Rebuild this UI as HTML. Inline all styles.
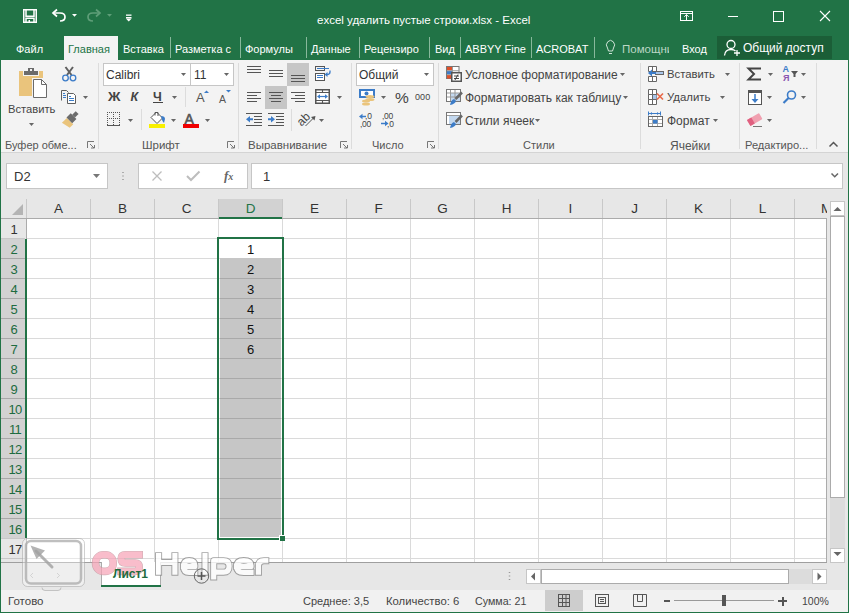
<!DOCTYPE html>
<html><head><meta charset="utf-8"><style>
*{margin:0;padding:0;box-sizing:border-box}
html,body{width:849px;height:613px;overflow:hidden;background:#e7e7e7;font-family:"Liberation Sans",sans-serif;font-size:12px;color:#444}
.a{position:absolute;white-space:nowrap}
.tab{color:#fff;font-size:11px;top:42px}
.tsep{top:37px;width:1px;height:21px;background:#88b89b}
.gsep{top:63px;width:1px;height:86px;background:#dcdcdc}
.glbl{top:138px;color:#555;font-size:11.5px}
.combo{background:#fff;border:1px solid #c6c6c6}
.ch{top:203px;font-size:13px;color:#333;text-align:center;width:63px}
.rh{left:1px;width:25px;font-size:13px;color:#333;text-align:center}
.num{font-size:13px;color:#111;text-align:center;width:63px;left:219px}
svg{position:absolute;overflow:visible}
</style></head><body>
<div class="a" style="left:0px;top:0px;width:849px;height:60px;background:#217346;"></div>
<div class="a" style="left:317px;top:14px;color:#fff;font-size:11.5px">excel удалить пустые строки.xlsx - Excel</div>
<div class="a" style="left:64px;top:36px;width:54px;height:24px;background:#f3f3f3;"></div>
<div class="a" style="left:16px;top:43px;color:#fff;font-size:11px">Файл</div>
<div class="a" style="left:68px;top:43px;color:#217346;font-size:11px">Главная</div>
<div class="a" style="left:123px;top:43px;color:#fff;font-size:11px">Вставка</div>
<div class="a" style="left:170px;top:37px;width:1px;height:21px;background:#88b89b;"></div>
<div class="a" style="left:175px;top:43px;color:#fff;font-size:11px">Разметка с</div>
<div class="a" style="left:240px;top:37px;width:1px;height:21px;background:#88b89b;"></div>
<div class="a" style="left:245px;top:43px;color:#fff;font-size:11px">Формулы</div>
<div class="a" style="left:306px;top:37px;width:1px;height:21px;background:#88b89b;"></div>
<div class="a" style="left:311px;top:43px;color:#fff;font-size:11px">Данные</div>
<div class="a" style="left:359px;top:37px;width:1px;height:21px;background:#88b89b;"></div>
<div class="a" style="left:364px;top:43px;color:#fff;font-size:11px">Рецензиро</div>
<div class="a" style="left:429px;top:37px;width:1px;height:21px;background:#88b89b;"></div>
<div class="a" style="left:435px;top:43px;color:#fff;font-size:11px">Вид</div>
<div class="a" style="left:460px;top:37px;width:1px;height:21px;background:#88b89b;"></div>
<div class="a" style="left:465px;top:43px;color:#fff;font-size:11px">ABBYY Fine</div>
<div class="a" style="left:531px;top:37px;width:1px;height:21px;background:#88b89b;"></div>
<div class="a" style="left:536px;top:43px;color:#fff;font-size:11px">ACROBAT</div>
<div class="a" style="left:594px;top:37px;width:1px;height:21px;background:#88b89b;"></div>
<div class="a" style="left:622px;top:43px;color:#bcd7c5;font-size:11.5px;width:47px;overflow:hidden">Помощник</div>
<div class="a" style="left:682px;top:43px;color:#fff;font-size:11px">Вход</div>
<div class="a" style="left:717px;top:36px;width:115px;height:23px;background:#1b5e37;"></div>
<div class="a" style="left:743px;top:41px;color:#fff;font-size:12px">Общий доступ</div>
<div class="a" style="left:1px;top:60px;width:847px;height:92px;background:#f3f3f3;"></div>
<div class="a" style="left:1px;top:152px;width:847px;height:1px;background:#d4d4d4;"></div>
<div class="a" style="left:98px;top:63px;width:1px;height:86px;background:#dcdcdc;"></div>
<div class="a" style="left:238px;top:63px;width:1px;height:86px;background:#dcdcdc;"></div>
<div class="a" style="left:351px;top:63px;width:1px;height:86px;background:#dcdcdc;"></div>
<div class="a" style="left:438px;top:63px;width:1px;height:86px;background:#dcdcdc;"></div>
<div class="a" style="left:640px;top:63px;width:1px;height:86px;background:#dcdcdc;"></div>
<div class="a" style="left:739px;top:63px;width:1px;height:86px;background:#dcdcdc;"></div>
<div class="a" style="left:816px;top:63px;width:1px;height:86px;background:#dcdcdc;"></div>
<div class="a" style="left:8px;top:103px;color:#444;font-size:11.2px">Вставить</div>
<div class="a" style="left:5px;top:138.5px;color:#555;font-size:11px">Буфер обме...</div>
<div class="a combo" style="left:103px;top:63px;width:88px;height:23px"></div>
<div class="a combo" style="left:190px;top:63px;width:44px;height:23px"></div>
<div class="a" style="left:106px;top:68px;color:#333;font-size:12px">Calibri</div>
<div class="a" style="left:194px;top:68px;color:#333;font-size:12px">11</div>
<div class="a" style="left:107.5px;top:89.5px;color:#444;font-size:12.5px;font-weight:bold;transform:scaleX(1.1);transform-origin:0 0">Ж</div>
<div class="a" style="left:130.5px;top:89.5px;color:#444;font-size:12.5px;font-weight:bold;font-style:italic">К</div>
<div class="a" style="left:153px;top:89.5px;color:#444;font-size:12.5px;font-weight:bold">Ч</div>
<div class="a" style="left:196px;top:90px;color:#555;font-size:13px">A</div>
<div class="a" style="left:219px;top:93px;color:#555;font-size:10.5px">A</div>
<div class="a" style="left:184.5px;top:110.5px;color:#555;font-size:14px;-webkit-text-stroke:0.6px #555">A</div>
<div class="a" style="left:142px;top:138.5px;color:#555;font-size:11.5px">Шрифт</div>
<div class="a" style="left:297px;top:111px;font-size:12px;color:#444;transform:rotate(-45deg);transform-origin:8px 8px;-webkit-font-smoothing:grayscale">ab</div>
<div class="a" style="left:248px;top:138.5px;color:#555;font-size:11.5px">Выравнивание</div>
<div class="a combo" style="left:356px;top:63px;width:78px;height:23px"></div>
<div class="a" style="left:359px;top:68px;color:#333;font-size:12px">Общий</div>
<div class="a" style="left:395px;top:88.5px;color:#444;font-size:15.5px">%</div>
<div class="a" style="left:415px;top:92px;color:#444;font-size:9px;letter-spacing:0.1px">000</div>
<div class="a" style="left:372px;top:138.5px;color:#555;font-size:11px">Число</div>
<div class="a" style="left:465px;top:68px;color:#444;font-size:12px">Условное форматирование</div>
<div class="a" style="left:465px;top:91px;color:#444;font-size:12px">Форматировать как таблицу</div>
<div class="a" style="left:465px;top:114px;color:#444;font-size:12px">Стили ячеек</div>
<div class="a" style="left:523px;top:138.5px;color:#555;font-size:11px">Стили</div>
<div class="a" style="left:667px;top:68px;color:#444;font-size:11.3px">Вставить</div>
<div class="a" style="left:667px;top:91px;color:#444;font-size:11.4px">Удалить</div>
<div class="a" style="left:667px;top:114px;color:#444;font-size:12px">Формат</div>
<div class="a" style="left:670px;top:138.5px;color:#555;font-size:12px">Ячейки</div>
<div class="a" style="left:782.5px;top:64px;color:#3c7cc8;font-size:9px;font-weight:bold">A</div>
<div class="a" style="left:783px;top:72.5px;color:#8a55b0;font-size:9px;font-weight:bold">Я</div>
<div class="a" style="left:745px;top:138.5px;color:#555;font-size:11.1px">Редактиро...</div>
<div class="a combo" style="left:6px;top:163px;width:102px;height:26px"></div>
<div class="a" style="left:14px;top:169px;font-size:13px;color:#333">D2</div>
<div class="a combo" style="left:138px;top:163px;width:110px;height:26px"></div>
<div class="a combo" style="left:251px;top:163px;width:592px;height:26px"></div>
<div class="a" style="left:263px;top:169px;font-size:13px;color:#333">1</div>
<svg style="left:0;top:0" width="849" height="613"><polygon points="23,204 23,215 12,215" fill="#b4b4b4"/></svg>
<div class="a" style="left:219px;top:199px;width:63px;height:18px;background:#d2d2d2;"></div>
<div class="a" style="left:1px;top:218px;width:826px;height:1px;background:#ababab;"></div>
<div class="a" style="left:219px;top:217px;width:63px;height:2px;background:#217346;"></div>
<div class="a" style="left:26px;top:199px;width:1px;height:19px;background:#c8c8c8;"></div>
<div class="a" style="left:90px;top:199px;width:1px;height:19px;background:#c8c8c8;"></div>
<div class="a" style="left:154px;top:199px;width:1px;height:19px;background:#c8c8c8;"></div>
<div class="a" style="left:218px;top:199px;width:1px;height:19px;background:#c8c8c8;"></div>
<div class="a" style="left:282px;top:199px;width:1px;height:19px;background:#c8c8c8;"></div>
<div class="a" style="left:346px;top:199px;width:1px;height:19px;background:#c8c8c8;"></div>
<div class="a" style="left:410px;top:199px;width:1px;height:19px;background:#c8c8c8;"></div>
<div class="a" style="left:474px;top:199px;width:1px;height:19px;background:#c8c8c8;"></div>
<div class="a" style="left:538px;top:199px;width:1px;height:19px;background:#c8c8c8;"></div>
<div class="a" style="left:602px;top:199px;width:1px;height:19px;background:#c8c8c8;"></div>
<div class="a" style="left:666px;top:199px;width:1px;height:19px;background:#c8c8c8;"></div>
<div class="a" style="left:730px;top:199px;width:1px;height:19px;background:#c8c8c8;"></div>
<div class="a" style="left:794px;top:199px;width:1px;height:19px;background:#c8c8c8;"></div>
<div class="a" style="left:27px;top:200.5px;font-size:13.5px;color:#333;width:63px;text-align:center">A</div>
<div class="a" style="left:91px;top:200.5px;font-size:13.5px;color:#333;width:63px;text-align:center">B</div>
<div class="a" style="left:155px;top:200.5px;font-size:13.5px;color:#333;width:63px;text-align:center">C</div>
<div class="a" style="left:219px;top:200.5px;font-size:13.5px;color:#217346;width:63px;text-align:center">D</div>
<div class="a" style="left:283px;top:200.5px;font-size:13.5px;color:#333;width:63px;text-align:center">E</div>
<div class="a" style="left:347px;top:200.5px;font-size:13.5px;color:#333;width:63px;text-align:center">F</div>
<div class="a" style="left:411px;top:200.5px;font-size:13.5px;color:#333;width:63px;text-align:center">G</div>
<div class="a" style="left:475px;top:200.5px;font-size:13.5px;color:#333;width:63px;text-align:center">H</div>
<div class="a" style="left:539px;top:200.5px;font-size:13.5px;color:#333;width:63px;text-align:center">I</div>
<div class="a" style="left:603px;top:200.5px;font-size:13.5px;color:#333;width:63px;text-align:center">J</div>
<div class="a" style="left:667px;top:200.5px;font-size:13.5px;color:#333;width:63px;text-align:center">K</div>
<div class="a" style="left:731px;top:200.5px;font-size:13.5px;color:#333;width:63px;text-align:center">L</div>
<div class="a" style="left:795px;top:200.5px;font-size:13.5px;color:#333;width:63px;text-align:center">M</div>
<div class="a" style="left:827px;top:199px;width:3px;height:20px;background:#e7e7e7;"></div>
<div class="a" style="left:27px;top:219px;width:799px;height:343px;background:#fff;"></div>
<div class="a" style="left:1px;top:219px;width:25px;height:343px;background:#e7e7e7;"></div>
<div class="a" style="left:1px;top:239px;width:24px;height:299px;background:#d2d2d2;"></div>
<div class="a" style="left:25px;top:239px;width:2px;height:299px;background:#217346;"></div>
<div class="a" style="left:26px;top:219px;width:1px;height:20px;background:#ababab;"></div>
<div class="a" style="left:26px;top:538px;width:1px;height:24px;background:#ababab;"></div>
<div class="a" style="left:27px;top:238px;width:799px;height:1px;background:#dadada;"></div>
<div class="a" style="left:1px;top:238px;width:24px;height:1px;background:#c8c8c8;"></div>
<div class="a" style="left:27px;top:258px;width:799px;height:1px;background:#dadada;"></div>
<div class="a" style="left:1px;top:258px;width:24px;height:1px;background:#a8a8a8;"></div>
<div class="a" style="left:27px;top:278px;width:799px;height:1px;background:#dadada;"></div>
<div class="a" style="left:1px;top:278px;width:24px;height:1px;background:#a8a8a8;"></div>
<div class="a" style="left:27px;top:298px;width:799px;height:1px;background:#dadada;"></div>
<div class="a" style="left:1px;top:298px;width:24px;height:1px;background:#a8a8a8;"></div>
<div class="a" style="left:27px;top:318px;width:799px;height:1px;background:#dadada;"></div>
<div class="a" style="left:1px;top:318px;width:24px;height:1px;background:#a8a8a8;"></div>
<div class="a" style="left:27px;top:338px;width:799px;height:1px;background:#dadada;"></div>
<div class="a" style="left:1px;top:338px;width:24px;height:1px;background:#a8a8a8;"></div>
<div class="a" style="left:27px;top:358px;width:799px;height:1px;background:#dadada;"></div>
<div class="a" style="left:1px;top:358px;width:24px;height:1px;background:#a8a8a8;"></div>
<div class="a" style="left:27px;top:378px;width:799px;height:1px;background:#dadada;"></div>
<div class="a" style="left:1px;top:378px;width:24px;height:1px;background:#a8a8a8;"></div>
<div class="a" style="left:27px;top:398px;width:799px;height:1px;background:#dadada;"></div>
<div class="a" style="left:1px;top:398px;width:24px;height:1px;background:#a8a8a8;"></div>
<div class="a" style="left:27px;top:418px;width:799px;height:1px;background:#dadada;"></div>
<div class="a" style="left:1px;top:418px;width:24px;height:1px;background:#a8a8a8;"></div>
<div class="a" style="left:27px;top:438px;width:799px;height:1px;background:#dadada;"></div>
<div class="a" style="left:1px;top:438px;width:24px;height:1px;background:#a8a8a8;"></div>
<div class="a" style="left:27px;top:458px;width:799px;height:1px;background:#dadada;"></div>
<div class="a" style="left:1px;top:458px;width:24px;height:1px;background:#a8a8a8;"></div>
<div class="a" style="left:27px;top:478px;width:799px;height:1px;background:#dadada;"></div>
<div class="a" style="left:1px;top:478px;width:24px;height:1px;background:#a8a8a8;"></div>
<div class="a" style="left:27px;top:498px;width:799px;height:1px;background:#dadada;"></div>
<div class="a" style="left:1px;top:498px;width:24px;height:1px;background:#a8a8a8;"></div>
<div class="a" style="left:27px;top:518px;width:799px;height:1px;background:#dadada;"></div>
<div class="a" style="left:1px;top:518px;width:24px;height:1px;background:#a8a8a8;"></div>
<div class="a" style="left:27px;top:538px;width:799px;height:1px;background:#dadada;"></div>
<div class="a" style="left:1px;top:538px;width:24px;height:1px;background:#c8c8c8;"></div>
<div class="a" style="left:27px;top:558px;width:799px;height:1px;background:#dadada;"></div>
<div class="a" style="left:1px;top:558px;width:24px;height:1px;background:#c8c8c8;"></div>
<div class="a" style="left:90px;top:219px;width:1px;height:343px;background:#dadada;"></div>
<div class="a" style="left:154px;top:219px;width:1px;height:343px;background:#dadada;"></div>
<div class="a" style="left:218px;top:219px;width:1px;height:343px;background:#dadada;"></div>
<div class="a" style="left:282px;top:219px;width:1px;height:343px;background:#dadada;"></div>
<div class="a" style="left:346px;top:219px;width:1px;height:343px;background:#dadada;"></div>
<div class="a" style="left:410px;top:219px;width:1px;height:343px;background:#dadada;"></div>
<div class="a" style="left:474px;top:219px;width:1px;height:343px;background:#dadada;"></div>
<div class="a" style="left:538px;top:219px;width:1px;height:343px;background:#dadada;"></div>
<div class="a" style="left:602px;top:219px;width:1px;height:343px;background:#dadada;"></div>
<div class="a" style="left:666px;top:219px;width:1px;height:343px;background:#dadada;"></div>
<div class="a" style="left:730px;top:219px;width:1px;height:343px;background:#dadada;"></div>
<div class="a" style="left:794px;top:219px;width:1px;height:343px;background:#dadada;"></div>
<div class="a" style="left:220px;top:258px;width:61px;height:279px;background:#c6c6c6;"></div>
<div class="a" style="left:220px;top:278px;width:61px;height:1px;background:#a9a9a9;"></div>
<div class="a" style="left:220px;top:298px;width:61px;height:1px;background:#a9a9a9;"></div>
<div class="a" style="left:220px;top:318px;width:61px;height:1px;background:#a9a9a9;"></div>
<div class="a" style="left:220px;top:338px;width:61px;height:1px;background:#a9a9a9;"></div>
<div class="a" style="left:220px;top:358px;width:61px;height:1px;background:#a9a9a9;"></div>
<div class="a" style="left:220px;top:378px;width:61px;height:1px;background:#a9a9a9;"></div>
<div class="a" style="left:220px;top:398px;width:61px;height:1px;background:#a9a9a9;"></div>
<div class="a" style="left:220px;top:418px;width:61px;height:1px;background:#a9a9a9;"></div>
<div class="a" style="left:220px;top:438px;width:61px;height:1px;background:#a9a9a9;"></div>
<div class="a" style="left:220px;top:458px;width:61px;height:1px;background:#a9a9a9;"></div>
<div class="a" style="left:220px;top:478px;width:61px;height:1px;background:#a9a9a9;"></div>
<div class="a" style="left:220px;top:498px;width:61px;height:1px;background:#a9a9a9;"></div>
<div class="a" style="left:220px;top:518px;width:61px;height:1px;background:#a9a9a9;"></div>
<div class="a" style="left:217px;top:237px;width:67px;height:2px;background:#217346;"></div>
<div class="a" style="left:217px;top:237px;width:2px;height:303px;background:#217346;"></div>
<div class="a" style="left:282px;top:237px;width:2px;height:298px;background:#217346;"></div>
<div class="a" style="left:217px;top:538px;width:62px;height:2px;background:#217346;"></div>
<div class="a" style="left:279px;top:535px;width:6px;height:6px;background:#fff;"></div>
<div class="a" style="left:280px;top:536px;width:5px;height:5px;background:#217346;"></div>
<div class="a" style="left:1.5px;top:222px;font-size:13px;color:#333;width:25px;text-align:center;">1</div>
<div class="a" style="left:1.5px;top:242px;font-size:13px;color:#1d6b40;width:25px;text-align:center;">2</div>
<div class="a" style="left:1.5px;top:262px;font-size:13px;color:#1d6b40;width:25px;text-align:center;">3</div>
<div class="a" style="left:1.5px;top:282px;font-size:13px;color:#1d6b40;width:25px;text-align:center;">4</div>
<div class="a" style="left:1.5px;top:302px;font-size:13px;color:#1d6b40;width:25px;text-align:center;">5</div>
<div class="a" style="left:1.5px;top:322px;font-size:13px;color:#1d6b40;width:25px;text-align:center;">6</div>
<div class="a" style="left:1.5px;top:342px;font-size:13px;color:#1d6b40;width:25px;text-align:center;">7</div>
<div class="a" style="left:1.5px;top:362px;font-size:13px;color:#1d6b40;width:25px;text-align:center;">8</div>
<div class="a" style="left:1.5px;top:382px;font-size:13px;color:#1d6b40;width:25px;text-align:center;">9</div>
<div class="a" style="left:2.5px;top:402px;font-size:13px;color:#1d6b40;width:25px;text-align:center;letter-spacing:-0.8px;">10</div>
<div class="a" style="left:2.5px;top:422px;font-size:13px;color:#1d6b40;width:25px;text-align:center;letter-spacing:-0.8px;">11</div>
<div class="a" style="left:2.5px;top:442px;font-size:13px;color:#1d6b40;width:25px;text-align:center;letter-spacing:-0.8px;">12</div>
<div class="a" style="left:2.5px;top:462px;font-size:13px;color:#1d6b40;width:25px;text-align:center;letter-spacing:-0.8px;">13</div>
<div class="a" style="left:2.5px;top:482px;font-size:13px;color:#1d6b40;width:25px;text-align:center;letter-spacing:-0.8px;">14</div>
<div class="a" style="left:2.5px;top:502px;font-size:13px;color:#1d6b40;width:25px;text-align:center;letter-spacing:-0.8px;">15</div>
<div class="a" style="left:2.5px;top:522px;font-size:13px;color:#1d6b40;width:25px;text-align:center;letter-spacing:-0.8px;">16</div>
<div class="a" style="left:2.5px;top:542px;font-size:13px;color:#333;width:25px;text-align:center;letter-spacing:-0.8px;">17</div>
<div class="a" style="left:219px;top:242px;font-size:13px;color:#111;width:63px;text-align:center">1</div>
<div class="a" style="left:219px;top:262px;font-size:13px;color:#111;width:63px;text-align:center">2</div>
<div class="a" style="left:219px;top:282px;font-size:13px;color:#111;width:63px;text-align:center">3</div>
<div class="a" style="left:219px;top:302px;font-size:13px;color:#111;width:63px;text-align:center">4</div>
<div class="a" style="left:219px;top:322px;font-size:13px;color:#111;width:63px;text-align:center">5</div>
<div class="a" style="left:219px;top:342px;font-size:13px;color:#111;width:63px;text-align:center">6</div>
<div class="a" style="left:826px;top:219px;width:1px;height:344px;background:#ababab;"></div>
<div class="a" style="left:224px;top:168px;color:#666;font-size:13px;font-family:'Liberation Serif',serif;font-weight:bold"><i>f</i><span style="font-size:10px;font-style:italic">x</span></div>
<div class="a" style="left:830px;top:216px;width:15px;height:332px;background:#dcdcdc;"></div>
<div class="a" style="left:830px;top:201px;width:15px;height:15px;background:#fff;border:1px solid #c6c6c6"></div>
<div class="a" style="left:830px;top:216px;width:15px;height:282px;background:#fff;border:1px solid #ababab"></div>
<div class="a" style="left:830px;top:548px;width:15px;height:15px;background:#fff;border:1px solid #c6c6c6"></div>
<div class="a" style="left:1px;top:562px;width:826px;height:1px;background:#9f9f9f;"></div>
<div class="a" style="left:101px;top:562px;width:60px;height:25px;background:#fff;border-left:1px solid #ababab;border-right:1px solid #ababab"></div>
<div class="a" style="left:101px;top:585px;width:60px;height:2px;background:#217346;"></div>
<div class="a" style="left:541px;top:569px;width:271px;height:15px;background:#dcdcdc;"></div>
<div class="a" style="left:526px;top:569px;width:15px;height:15px;background:#fff;border:1px solid #c6c6c6"></div>
<div class="a" style="left:541px;top:569px;width:248px;height:15px;background:#fff;border:1px solid #ababab"></div>
<div class="a" style="left:812px;top:569px;width:15px;height:15px;background:#fff;border:1px solid #c6c6c6"></div>
<div class="a" style="left:1px;top:590px;width:847px;height:22px;background:#f1f1f1;"></div>
<div class="a" style="left:8px;top:595px;color:#444;font-size:11.5px">Готово</div>
<div class="a" style="left:303px;top:595px;color:#444;font-size:11px">Среднее: 3,5</div>
<div class="a" style="left:386px;top:595px;color:#444;font-size:11.3px">Количество: 6</div>
<div class="a" style="left:475px;top:595px;color:#444;font-size:10.7px">Сумма: 21</div>
<div class="a" style="left:545px;top:590px;width:38px;height:21px;background:#cdcdcd;"></div>
<div class="a" style="left:664px;top:600px;width:6px;height:2px;background:#555;"></div>
<div class="a" style="left:674px;top:600px;width:100px;height:1px;background:#999;"></div>
<div class="a" style="left:722px;top:595px;width:4px;height:11px;background:#555;"></div>
<div class="a" style="left:778px;top:600px;width:9px;height:2px;background:#555;"></div>
<div class="a" style="left:781.5px;top:596.5px;width:2px;height:9px;background:#555;"></div>
<div class="a" style="left:802px;top:595px;color:#444;font-size:10.5px">100%</div>
<svg style="left:0;top:0" width="849" height="613" shape-rendering="geometricPrecision"><rect x="23.75" y="9.75" width="12.5" height="12.5" fill="none" stroke="#fff" stroke-width="1.5"/><path d="M26,10 V16.25 H34 V10" fill="none" stroke="#fff" stroke-width="1.5"/><path d="M26,22 V18.25 H34 V22" fill="none" stroke="#fff" stroke-width="1.5"/><rect x="28.5" y="20" width="1.5" height="2" fill="#fff"/><path d="M53.5,13 H60 Q65,13 65,17 Q65,21 60,21" fill="none" stroke="#fff" stroke-width="1.7"/><path d="M57,9.5 L53,13 L57,16.5" fill="none" stroke="#fff" stroke-width="1.7"/><polygon points="72,14 77,14 74.5,16.8" fill="#fff"/><path d="M99.5,13 H93 Q88,13 88,17 Q88,21 93,21" fill="none" stroke="#5e9e78" stroke-width="1.7"/><path d="M96,9.5 L100,13 L96,16.5" fill="none" stroke="#5e9e78" stroke-width="1.7"/><polygon points="107,14 112,14 109.5,16.8" fill="#5e9e78"/><rect x="126" y="14.5" width="5.5" height="1.3" fill="#fff"/><rect x="126" y="17" width="5.5" height="1.3" fill="#fff"/><polygon points="125.8,18.5 131.7,18.5 128.75,21.5" fill="#fff"/><rect x="680.5" y="11.5" width="12" height="9" fill="none" stroke="#fff"/><path d="M681,13.5 H692 M686.5,14.5 V21 M684.3,16.8 L686.5,14.6 L688.7,16.8" fill="none" stroke="#fff"/><rect x="728" y="16" width="10" height="1" fill="#fff"/><rect x="773.5" y="11.5" width="10" height="10" fill="none" stroke="#fff"/><path d="M820,11 L830,21 M830,11 L820,21" fill="none" stroke="#fff" stroke-width="1.1"/><path d="M607.5,48 A4,4.5 0 1 1 613.5,48 L612.5,51 H608.5 Z" fill="none" stroke="#d0e4d8"/><path d="M609,53.5 H612" stroke="#d0e4d8"/><circle cx="731" cy="44.5" r="4" fill="none" stroke="#fff" stroke-width="1.3"/><path d="M724.5,55.5 Q725,49.5 731,49.5 Q734,49.5 735.5,51" fill="none" stroke="#fff" stroke-width="1.3"/><path d="M734,53 H740 M737,50 V56" fill="none" stroke="#fff" stroke-width="1.3"/><rect x="19" y="71" width="24" height="25" fill="#eac47c"/><rect x="23" y="70" width="16" height="6" fill="#f3f3f3"/><rect x="24" y="71" width="14" height="4" fill="#6b6b6b"/><rect x="28" y="68" width="6" height="4" fill="#6b6b6b"/><rect x="30" y="69" width="2" height="2" fill="#f3f3f3"/><rect x="32" y="78" width="16" height="21" fill="#f3f3f3"/><path d="M33.5,79.5 H41.5 L46.5,84.5 V97.5 H33.5 Z" fill="#fff" stroke="#6b6b6b"/><path d="M41.5,79.5 V84.5 H46.5" fill="none" stroke="#6b6b6b"/><polygon points="29,123 34,123 31.5,126" fill="#666"/><path d="M65.5,67 L71.5,75 M73,67 L67,75" stroke="#5f5f5f" stroke-width="2" fill="none"/><circle cx="65.5" cy="78" r="2.8" stroke="#3c7cc8" stroke-width="1.3" fill="none"/><circle cx="73" cy="78" r="2.8" stroke="#3c7cc8" stroke-width="1.3" fill="none"/><path d="M61.5,100.5 V90.5 H66.5 L68.5,92.5" fill="none" stroke="#5f5f5f"/><path d="M67.5,93.5 H73.5 L75.5,95.5 V103.5 H67.5 Z" fill="#fff" stroke="#5f5f5f"/><path d="M63,93.5 H65 M63,95.5 H66 M63,97.5 H66 M69,96.5 H71 M69,98.5 H74 M69,100.5 H74" stroke="#3c7cc8" fill="none"/><polygon points="83,96 88,96 85.5,99" fill="#666"/><g transform="rotate(-45 69 120)"><polygon points="62,117 69,117 69,126 64,126" fill="#eac47c"/><rect x="69" y="116.5" width="6" height="8" fill="#6b6b6b"/><rect x="75" y="118.5" width="5" height="4" fill="#6b6b6b"/></g><path d="M87.5,148 V141.5 H94" stroke="#777" fill="none"/><path d="M90,144 L94,148 M91,148 H94.5 V145" stroke="#777" fill="none"/><polygon points="181,73 186,73 183.5,76" fill="#666"/><polygon points="224,73 229,73 226.5,76" fill="#666"/><rect x="153" y="102" width="10" height="1" fill="#444"/><polygon points="172,96 177,96 174.5,99" fill="#666"/><rect x="185" y="87" width="1" height="20" fill="#dcdcdc"/><polygon points="204,93 209,93 206.5,90.5" fill="#3c7cc8"/><polygon points="226,90 231,90 228.5,92.5" fill="#3c7cc8"/><rect x="107" y="112" width="1" height="1" fill="#555"/><rect x="107" y="118" width="1" height="1" fill="#555"/><rect x="107" y="112" width="1" height="1" fill="#555"/><rect x="113" y="112" width="1" height="1" fill="#555"/><rect x="119" y="112" width="1" height="1" fill="#555"/><rect x="109" y="112" width="1" height="1" fill="#555"/><rect x="109" y="118" width="1" height="1" fill="#555"/><rect x="107" y="114" width="1" height="1" fill="#555"/><rect x="113" y="114" width="1" height="1" fill="#555"/><rect x="119" y="114" width="1" height="1" fill="#555"/><rect x="111" y="112" width="1" height="1" fill="#555"/><rect x="111" y="118" width="1" height="1" fill="#555"/><rect x="107" y="116" width="1" height="1" fill="#555"/><rect x="113" y="116" width="1" height="1" fill="#555"/><rect x="119" y="116" width="1" height="1" fill="#555"/><rect x="113" y="112" width="1" height="1" fill="#555"/><rect x="113" y="118" width="1" height="1" fill="#555"/><rect x="107" y="118" width="1" height="1" fill="#555"/><rect x="113" y="118" width="1" height="1" fill="#555"/><rect x="119" y="118" width="1" height="1" fill="#555"/><rect x="115" y="112" width="1" height="1" fill="#555"/><rect x="115" y="118" width="1" height="1" fill="#555"/><rect x="107" y="120" width="1" height="1" fill="#555"/><rect x="113" y="120" width="1" height="1" fill="#555"/><rect x="119" y="120" width="1" height="1" fill="#555"/><rect x="117" y="112" width="1" height="1" fill="#555"/><rect x="117" y="118" width="1" height="1" fill="#555"/><rect x="107" y="122" width="1" height="1" fill="#555"/><rect x="113" y="122" width="1" height="1" fill="#555"/><rect x="119" y="122" width="1" height="1" fill="#555"/><rect x="119" y="112" width="1" height="1" fill="#555"/><rect x="119" y="118" width="1" height="1" fill="#555"/><rect x="107" y="124" width="1" height="1" fill="#555"/><rect x="113" y="124" width="1" height="1" fill="#555"/><rect x="119" y="124" width="1" height="1" fill="#555"/><rect x="107" y="125" width="13" height="1" fill="#555"/><polygon points="128,119 133,119 130.5,122" fill="#666"/><rect x="141" y="109" width="1" height="21" fill="#dcdcdc"/><path d="M151,117.5 L156.5,112 L162.5,118 L157,123.5 Z" fill="#fff" stroke="#555"/><path d="M155,115.5 V112.5 H158 V116" fill="none" stroke="#555"/><path d="M161,116 Q165,116 165,119 L164,123 Q162,121 161.5,118 Z" fill="#3c7cc8"/><rect x="149" y="124" width="16" height="4" fill="#f8f000"/><polygon points="171,119 176,119 173.5,122" fill="#666"/><rect x="183" y="124" width="16" height="4" fill="#f00000"/><polygon points="205,119 210,119 207.5,122" fill="#666"/><path d="M227.5,148 V141.5 H234" stroke="#777" fill="none"/><path d="M230,144 L234,148 M231,148 H234.5 V145" stroke="#777" fill="none"/><rect x="287" y="63" width="22" height="23" fill="#c6c6c6"/><rect x="265" y="86" width="22" height="23" fill="#c6c6c6"/><rect x="247" y="66" width="14" height="1" fill="#555"/><rect x="247" y="69" width="14" height="1" fill="#555"/><rect x="247" y="72" width="14" height="1" fill="#555"/><rect x="269" y="70" width="14" height="1" fill="#555"/><rect x="269" y="73" width="14" height="1" fill="#555"/><rect x="269" y="76" width="14" height="1" fill="#555"/><rect x="291" y="75" width="14" height="1" fill="#555"/><rect x="291" y="78" width="14" height="1" fill="#555"/><rect x="291" y="81" width="14" height="1" fill="#555"/><rect x="247" y="92" width="14" height="1" fill="#555"/><rect x="247" y="95" width="10" height="1" fill="#555"/><rect x="247" y="98" width="14" height="1" fill="#555"/><rect x="247" y="101" width="10" height="1" fill="#555"/><rect x="269" y="92" width="14" height="1" fill="#555"/><rect x="271" y="95" width="10" height="1" fill="#555"/><rect x="269" y="98" width="14" height="1" fill="#555"/><rect x="271" y="101" width="10" height="1" fill="#555"/><rect x="291" y="92" width="14" height="1" fill="#555"/><rect x="295" y="95" width="10" height="1" fill="#555"/><rect x="291" y="98" width="14" height="1" fill="#555"/><rect x="295" y="101" width="10" height="1" fill="#555"/><rect x="315.5" y="66.5" width="9" height="4" fill="none" stroke="#555"/><rect x="315.5" y="73.5" width="9" height="7" fill="#fff" stroke="#555"/><path d="M317,68.5 H329 M317,75.5 H323 M317,77.5 H323" stroke="#3c7cc8" fill="none"/><path d="M330,70.5 V72 Q330,74.5 327,74.5 H326" stroke="#3c7cc8" stroke-width="1.3" fill="none"/><polygon points="324.5,74.5 327.5,72 327.5,77" fill="#3c7cc8"/><rect x="315.75" y="89.75" width="13.5" height="13.5" fill="#fff" stroke="#555" stroke-width="1.5"/><path d="M316,92.5 H329 M316,100.5 H329 M322.5,90 V92 M322.5,101 V103" stroke="#555" stroke-width="1.1" fill="none"/><path d="M319,96.5 H326" stroke="#3c7cc8" stroke-width="1.2" fill="none"/><polygon points="317,96.5 320,94.3 320,98.7" fill="#3c7cc8"/><polygon points="328,96.5 325,94.3 325,98.7" fill="#3c7cc8"/><polygon points="337,96 342,96 339.5,99" fill="#666"/><rect x="246" y="113" width="16" height="1" fill="#555"/><rect x="246" y="125" width="16" height="1" fill="#555"/><rect x="254" y="116" width="8" height="1" fill="#555"/><rect x="254" y="119" width="8" height="1" fill="#555"/><rect x="254" y="122" width="8" height="1" fill="#555"/><rect x="268" y="113" width="16" height="1" fill="#555"/><rect x="268" y="125" width="16" height="1" fill="#555"/><rect x="276" y="116" width="8" height="1" fill="#555"/><rect x="276" y="119" width="8" height="1" fill="#555"/><rect x="276" y="122" width="8" height="1" fill="#555"/><path d="M249,119.25 H253" stroke="#3c7cc8" stroke-width="2"/><polygon points="246,119.25 250,116 250,122.5" fill="#3c7cc8"/><path d="M268,119.25 H272" stroke="#3c7cc8" stroke-width="2"/><polygon points="275,119.25 271,116 271,122.5" fill="#3c7cc8"/><rect x="291" y="109" width="1" height="22" fill="#dcdcdc"/><path d="M305.5,126 L314,117.5" stroke="#555" fill="none"/><polygon points="315.5,116 311,117 314.5,120.5" fill="#555"/><polygon points="319,119 324,119 321.5,122" fill="#666"/><path d="M340.5,148 V141.5 H347" stroke="#777" fill="none"/><path d="M343,144 L347,148 M344,148 H347.5 V145" stroke="#777" fill="none"/><polygon points="424,73 429,73 426.5,76" fill="#666"/><rect x="360" y="90" width="14" height="7" fill="#fff" stroke="#3c7cc8" stroke-width="2"/><circle cx="366.5" cy="93.5" r="2" fill="#3c7cc8"/><ellipse cx="370" cy="96.5" rx="4.5" ry="1.6" fill="#eac47c"/><ellipse cx="370" cy="99.5" rx="4.5" ry="1.6" fill="#eac47c"/><ellipse cx="366" cy="101" rx="4" ry="1.6" fill="#eac47c"/><ellipse cx="366" cy="104" rx="4" ry="1.5" fill="#eac47c"/><polygon points="381,96 386,96 383.5,99" fill="#666"/><text x="365" y="119" font-family="Liberation Sans" font-size="8.5" fill="#444">,0</text><text x="360" y="127" font-family="Liberation Sans" font-size="8.5" fill="#444" letter-spacing="-0.3">,00</text><path d="M361,116.5 H366" stroke="#3c7cc8" stroke-width="1.5"/><polygon points="359,116.5 362.5,113.8 362.5,119.2" fill="#3c7cc8"/><text x="382" y="119" font-family="Liberation Sans" font-size="8.5" fill="#444" letter-spacing="-0.3">,00</text><text x="387" y="127" font-family="Liberation Sans" font-size="8.5" fill="#444">,0</text><path d="M381,123.5 H386" stroke="#3c7cc8" stroke-width="1.5"/><polygon points="388.5,123.5 385,120.8 385,126.2" fill="#3c7cc8"/><path d="M427.5,148 V141.5 H434" stroke="#777" fill="none"/><path d="M430,144 L434,148 M431,148 H434.5 V145" stroke="#777" fill="none"/><rect x="446.5" y="66.5" width="12.5" height="12" fill="#fff" stroke="#777"/><rect x="447" y="67" width="5" height="3.5" fill="#e0502a"/><rect x="447" y="71" width="5" height="3.5" fill="#3c7cc8"/><rect x="447" y="75" width="5" height="3.5" fill="#e0502a"/><path d="M452.5,67 V79 M447,70.75 H459 M447,74.75 H459" stroke="#999"/><rect x="451.75" y="72.75" width="9.5" height="8.5" fill="#fff" stroke="#555" stroke-width="1.5"/><path d="M454,76 H459 M454,78.5 H459 M458,74.5 L455,80" stroke="#333" stroke-width="0.9"/><polygon points="620,73 625,73 622.5,76" fill="#666"/><rect x="446.5" y="89.5" width="14" height="12" fill="#fff" stroke="#777"/><rect x="450" y="93" width="10" height="8" fill="#c3d8ef"/><path d="M447,93 H460 M447,97 H460 M450.5,90 V101 M455,90 V101" stroke="#999"/><path d="M455.5,99 L462,92.5" stroke="#666" stroke-width="2.5"/><path d="M450,105 Q451,100 454,99 L456,101 Q455,104 450,105 Z" fill="#3c7cc8"/><polygon points="623,96 628,96 625.5,99" fill="#666"/><rect x="446.5" y="112.5" width="14" height="12" fill="#fff" stroke="#777"/><rect x="449" y="116" width="11" height="8" fill="#c3d8ef"/><path d="M447,115.5 H460" stroke="#999"/><path d="M455.5,122 L462,115.5" stroke="#666" stroke-width="2.5"/><path d="M450,128 Q451,123 454,122 L456,124 Q455,127 450,128 Z" fill="#3c7cc8"/><polygon points="535,119 540,119 537.5,122" fill="#666"/><path d="M648.5,66.5 h8 v5 h-8 z M652.5,66.5 v5 M648.5,76.5 h8 v5 h-8 z M652.5,76.5 v5" fill="#fff" stroke="#666"/><rect x="655.5" y="71.5" width="8" height="3" fill="#a9c6ea" stroke="#666"/><path d="M651,73 H656" stroke="#3c7cc8" stroke-width="2"/><polygon points="648,73 652,69.5 652,76.5" fill="#3c7cc8"/><path d="M648.5,89.5 h8 v5 h-8 z M652.5,89.5 v5 M648.5,94.5 h8 v5 h-8 z M652.5,94.5 v5 M648.5,99.5 h8 v5 h-8 z M652.5,99.5 v5" fill="#fff" stroke="#666"/><rect x="653" y="95" width="3.5" height="4" fill="#a9c6ea"/><path d="M657,93.5 L663,99.5 M663,93.5 L657,99.5" stroke="#e86a4a" stroke-width="1.7"/><path d="M649,113.5 H660 M648.5,111.5 V115.5 M660.5,111.5 V115.5" stroke="#3c7cc8"/><polygon points="650,113.5 652,112 652,115" fill="#3c7cc8"/><polygon points="659,113.5 657,112 657,115" fill="#3c7cc8"/><rect x="648.5" y="116.5" width="14" height="10" fill="#fff" stroke="#666"/><path d="M649,119.5 H662 M649,123.5 H662 M652.5,117 V126 M657.5,117 V126" stroke="#aaa"/><rect x="653" y="120" width="4.5" height="3.5" fill="#3c7cc8"/><polygon points="725,73 730,73 727.5,76" fill="#666"/><polygon points="720,96 725,96 722.5,99" fill="#666"/><polygon points="713,119 718,119 715.5,122" fill="#666"/><path d="M761,68.5 H748.5 L754,74 L748.5,79.5 H761" stroke="#444" stroke-width="2" fill="none"/><polygon points="768,73 773,73 770.5,76" fill="#666"/><polygon points="791,71 798,71 795.5,74 795.5,77 793.5,77 793.5,74" fill="#555"/><polygon points="801,73 806,73 803.5,76" fill="#666"/><rect x="748.5" y="90.5" width="13" height="14" fill="#fff" stroke="#555"/><rect x="748" y="90" width="14" height="3" fill="#555"/><path d="M755,94 V102" stroke="#3c7cc8" stroke-width="1.5"/><polygon points="751.5,99 758.5,99 755,103" fill="#3c7cc8"/><polygon points="767,96 772,96 769.5,99" fill="#666"/><circle cx="791.5" cy="95" r="4" stroke="#3c7cc8" stroke-width="1.6" fill="none"/><path d="M788.5,98 L783.5,103" stroke="#3c7cc8" stroke-width="2.2"/><polygon points="801,96 806,96 803.5,99" fill="#666"/><g transform="rotate(-30 755 120)"><rect x="748" y="116" width="14" height="7" rx="1" fill="#f0a0b0"/><rect x="748" y="116" width="5" height="7" fill="#e06080"/></g><rect x="753" y="126" width="9" height="1" fill="#777"/><polygon points="767,119 772,119 769.5,122" fill="#666"/><path d="M829.5,146.5 L833.5,142.5 L837.5,146.5" stroke="#555" stroke-width="1.5" fill="none"/><path d="M123,172 V173 M123,175.5 V176.5 M123,179 V180" stroke="#999" stroke-width="1.5"/><polygon points="93,174 100,174 96.5,178" fill="#777"/><path d="M152.5,171.5 L161.5,180.5 M161.5,171.5 L152.5,180.5" stroke="#bdbdbd" stroke-width="1.3"/><path d="M187,176 L191,180 L199.5,171.5" stroke="#bdbdbd" stroke-width="2" fill="none"/><path d="M831.5,173.5 L834.75,176.75 L838,173.5" stroke="#666" stroke-width="1.5" fill="none"/><polygon points="833.5,211 841.5,211 837.5,207" fill="#666"/><polygon points="833.5,552 841.5,552 837.5,556" fill="#666"/><path d="M509.5,572 V573 M509.5,575.5 V576.5 M509.5,579 V580" stroke="#999" stroke-width="1.5"/><polygon points="531,576.5 535,572.5 535,580.5" fill="#666"/><polygon points="821.5,576.5 817.5,572.5 817.5,580.5" fill="#666"/><rect x="558.5" y="594.5" width="11" height="12" fill="none" stroke="#555"/><path d="M562.5,595 V606 M566,595 V606 M559,598.5 H569 M559,602.5 H569" stroke="#555"/><rect x="595.5" y="594.5" width="13" height="12" fill="none" stroke="#555"/><rect x="598.5" y="597.5" width="7" height="6" fill="none" stroke="#555"/><path d="M600,599.5 H604 M600,601.5 H604" stroke="#555"/><path d="M633.5,606.5 V594.5 H646.5 V606.5 Z M637.5,595 V601.5 H642.5 V595" fill="none" stroke="#555"/></svg>
<svg style="left:0;top:0" width="849" height="613">
<rect x="22.5" y="538.5" width="62" height="48" rx="5" fill="rgba(255,255,255,0.35)" stroke="rgba(150,150,150,0.45)" stroke-width="1"/>
<rect x="26" y="541" width="55" height="42.5" rx="5" fill="none" stroke="rgba(170,170,170,0.75)" stroke-width="2.5"/>
<path d="M42,587.5 Q42,590.5 45,590.5 H58 Q61,590.5 61,587.5" fill="none" stroke="rgba(150,150,150,0.5)" stroke-width="1"/>
<path d="M36,551 L52,567" stroke="rgba(160,160,160,0.8)" stroke-width="3" stroke-linecap="round"/>
<polygon points="30.5,545.5 45,550.5 36.5,559" fill="rgba(160,160,160,0.8)"/>
<path d="M33,573 L30.5,575.5 L33,578 M57,573 L59.5,575.5 L57,578" fill="none" stroke="rgba(170,170,170,0.4)" stroke-width="1"/>
<g opacity="0.72" fill="none" stroke-linejoin="round" stroke-linecap="square">
<g stroke="#c09098" stroke-width="7.6"><rect x="95.6" y="554.8" width="17.6" height="16.6" rx="7.8"/><path d="M139.2,554.8 H125.5 Q121.2,554.8 121.2,558.8 Q121.2,563 125.5,563 H135 Q139.2,563 139.2,567.2 Q139.2,571.4 135,571.4 H121"/></g>
<g stroke="#f7a5b8" stroke-width="6.4"><rect x="95.6" y="554.8" width="17.6" height="16.6" rx="7.8"/><path d="M139.2,554.8 H125.5 Q121.2,554.8 121.2,558.8 Q121.2,563 125.5,563 H135 Q139.2,563 139.2,567.2 Q139.2,571.4 135,571.4 H121"/></g>
</g>
<g opacity="0.8" fill="none" stroke-linejoin="round" stroke-linecap="square" transform="translate(0,1)">
<g stroke="#8c8c8c" stroke-width="7"><path id="hp" d="M158.6,554.7 V571.2 M174.9,554.7 V571.2 M158.6,561.5 H174.9 M183.6,565.4 H194.8 V564.5 Q194.8,559.5 189.2,559.5 Q183.6,559.5 183.6,565.4 Q183.6,571.4 189.2,571.4 H194.8 M205,554.7 V571.2 M213.7,576 V559.7 H223.5 Q229.1,559.7 229.1,565.2 Q229.1,571.2 223.5,571.2 H213.7 M236.6,565.4 H251 V564.5 Q251,559.5 243.8,559.5 Q236.6,559.5 236.6,565.4 Q236.6,571.4 243.8,571.4 H251 M258.4,571.2 V565.2 Q258.4,559.7 264,559.7 H265.8"/></g>
<g stroke="#ffffff" stroke-width="5.2"><use href="#hp"/></g>
</g>
</svg>
<div class="a" style="left:113px;top:567px;color:#1e6b3e;font-size:12px;font-weight:bold">Лист1</div>
<svg style="left:0;top:0" width="849" height="613"><circle cx="201.5" cy="576" r="7.2" fill="none" stroke="#666" stroke-width="1"/><path d="M197.5,576 H205.5 M201.5,572 V580" stroke="#555" stroke-width="1.5"/></svg>
<div class="a" style="left:0;top:0;width:849px;height:613px;border:1px solid #217346;border-top:none"></div>
</body></html>
